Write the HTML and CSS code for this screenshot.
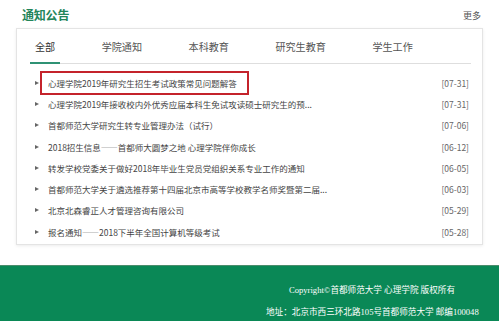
FILE: index.html
```html
<!DOCTYPE html>
<html lang="zh-CN">
<head>
    <meta charset="UTF-8">
    <meta name="viewport" content="width=device-width, initial-scale=1.0">
    <title>通知公告</title>
    <link rel="stylesheet" href="styles.css">
</head>
<body>
    <div class="header">
        <h2 class="title">通知公告</h2>
        <a class="more" href="#">更多</a>
    </div>

    <div class="panel">
        <div class="tabs">
            <div class="tab active">全部</div>
            <div class="tab">学院通知</div>
            <div class="tab">本科教育</div>
            <div class="tab">研究生教育</div>
            <div class="tab">学生工作</div>
        </div>
        <ul class="news">
            <li class="row"><span class="name marked">心理学院2019年研究生招生考试政策常见问题解答</span><span class="date">[07-31]</span></li>
            <li class="row"><span class="name">心理学院2019年接收校内外优秀应届本科生免试攻读硕士研究生的预...</span><span class="date">[07-31]</span></li>
            <li class="row"><span class="name">首都师范大学研究生转专业管理办法（试行）</span><span class="date">[07-06]</span></li>
            <li class="row"><span class="name">2018招生信息——首都师大圆梦之地 心理学院伴你成长</span><span class="date">[06-12]</span></li>
            <li class="row"><span class="name">转发学校党委关于做好2018年毕业生党员党组织关系专业工作的通知</span><span class="date">[06-05]</span></li>
            <li class="row"><span class="name">首都师范大学关于遴选推荐第十四届北京市高等学校教学名师奖暨第二届...</span><span class="date">[06-03]</span></li>
            <li class="row"><span class="name">北京北森睿正人才管理咨询有限公司</span><span class="date">[05-29]</span></li>
            <li class="row"><span class="name">报名通知——2018下半年全国计算机等级考试</span><span class="date">[05-28]</span></li>
        </ul>
    </div>

    <div class="footer">
        <div class="footer-info">
            <p>Copyright©首都师范大学 心理学院 版权所有</p>
            <p>地址：北京市西三环北路105号首都师范大学 邮编100048</p>
        </div>
    </div>
</body>
</html>
```

FILE: styles.css
```css
body {
  margin: 0;
  padding: 0;
  background: #fff;
  font-family: "Noto Sans CJK SC", "Noto Sans", sans-serif;
  color: #444;
}
.header {
  height: 28px;
  padding: 0 18px 0 22px;
  display: flex;
  align-items: center;
  justify-content: space-between;
  box-sizing: border-box;
}
.title {
  margin: 0;
  font-size: 12px;
  font-weight: bold;
  color: #23855a;
  letter-spacing: -0.2px;
}
.more {
  font-size: 9px;
  color: #555;
  text-decoration: none;
  padding-top: 2px;
}
.panel {
  margin: 0 16px;
  height: 217px;
  border: 1px solid #e4e4e4;
  box-shadow: 0 1px 3px rgba(0, 0, 0, 0.08);
  box-sizing: border-box;
}
.tabs {
  margin: 0 11px 0 13px;
  height: 34px;
  display: flex;
  align-items: stretch;
  border-bottom: 1px solid #dedede;
}
.tab {
  padding: 0 5px;
  margin-right: 36.5px;
  font-size: 10.1px;
  color: #555;
  display: flex;
  align-items: center;
  box-sizing: border-box;
}
.tab.active {
  color: #333;
  border-bottom: 2px solid #2f9274;
  margin-bottom: -1px;
  padding-top: 1px;
}
.news {
  list-style: none;
  margin: 0;
  padding: 8px 13px 0 18px;
}
.row {
  height: 21.3px;
  display: flex;
  align-items: center;
  justify-content: space-between;
  font-size: 8.5px;
}
.name {
  position: relative;
  padding-left: 13px;
  color: #444;
  white-space: nowrap;
}
.name::before {
  content: "";
  position: absolute;
  left: 0;
  top: 50%;
  margin-top: -2px;
  border-left: 4px solid #666;
  border-top: 2px solid transparent;
  border-bottom: 2px solid transparent;
}
.marked::after {
  content: "";
  position: absolute;
  left: 5px;
  right: -12px;
  top: -6px;
  bottom: -6px;
  border: 2px solid #c4232b;
}
.date {
  color: #666;
}
.footer {
  margin-top: 20px;
  height: 56px;
  background: #0a8856;
  border-top: 1px solid #4b8c6c;
  box-sizing: border-box;
  display: flex;
  justify-content: flex-end;
  padding-right: 21px;
}
.footer-info {
  width: 212px;
  text-align: center;
  color: #fff;
  font-family: "Liberation Serif", "Noto Sans CJK SC", serif;
  font-size: 8.6px;
  padding-top: 18px;
}
.footer-info p {
  margin: 0 0 10px;
  line-height: 12px;
  white-space: nowrap;
}
```
